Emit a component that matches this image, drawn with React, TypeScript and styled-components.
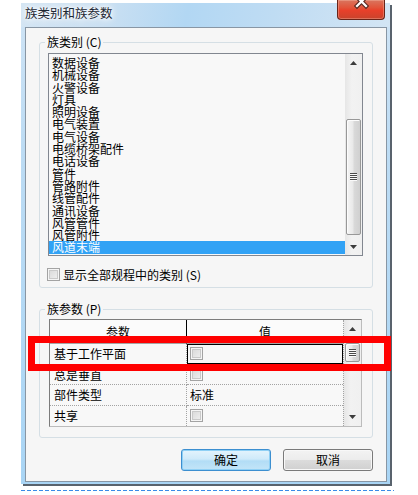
import React from "react";
import styled, { createGlobalStyle } from "styled-components";

const GlobalStyle = createGlobalStyle`
  html, body { margin: 0; padding: 0; background: #ffffff; }
  body {
    font-family: "Noto Sans CJK SC", "Liberation Sans", sans-serif;
    font-size: 12px;
    color: #000;
  }
  * { box-sizing: border-box; }
`;

const Page = styled.div`
  position: relative;
  width: 418px;
  height: 495px;
  padding: 3px 0 0 21px;
  overflow: hidden;
`;

const Window = styled.div`
  width: 369px;
  background: linear-gradient(180deg, #d0e4f5 0%, #bddcf4 30%, #a9d5f5 100%);
  box-shadow: 2px 2px 0 #59636d;
  padding-bottom: 2px;
`;

const TitleBar = styled.div`
  position: relative;
  height: 24px;
  padding: 1px 0 0 4px;
  background: linear-gradient(100deg, #d4e5f3 0%, #cbe0f2 22%, #b2d7f3 45%, #bfdcf3 68%, #d3e5f4 100%);
`;

const Title = styled.span`
  display: inline-block;
  font-size: 12.5px;
  line-height: 16px;
  color: #1d2733;
  text-shadow: 0 0 6px #fff, 0 0 3px #fff, 0 0 10px #fff;
`;

const CloseButton = styled.div`
  position: absolute;
  top: -3px;
  right: 5px;
  width: 48px;
  height: 20px;
  border: 1px solid #6a2418;
  border-top: none;
  border-radius: 0 0 4px 4px;
  background: linear-gradient(180deg, #d9755f 0%, #e2543a 40%, #e8402a 55%, #c9432c 100%);
  box-shadow: inset 0 0 0 1px rgba(255, 200, 180, 0.35);
  overflow: hidden;
`;

const Client = styled.div`
  margin: 0 3px 0 4px;
  border: 1px solid #8896a4;
  background: #f6f6f6;
  padding: 7px 13px 10px 13px;
`;

const Group = styled.fieldset<{ $top: number; $bottom: number }>`
  margin: ${(p) => p.$top}px 0 0 0;
  padding: 0 0 ${(p) => p.$bottom}px 0;
  border: 1px solid #d5dfe5;
  border-radius: 3px;
  min-width: 0;
`;

const Legend = styled.legend`
  margin-left: 5px;
  padding: 0 2px;
  font-size: 12px;
  line-height: 14px;
`;

const ListBox = styled.div`
  display: flex;
  width: 315px;
  height: 203px;
  margin: 4px 0 0 8px;
  border: 1px solid #828790;
  background: #f8f8f8;
`;

const ListItems = styled.div`
  flex: 1;
  padding-top: 3px;
  overflow: hidden;
`;

const ListItem = styled.div<{ $selected?: boolean }>`
  height: 12.3px;
  line-height: 12.3px;
  padding-left: 3px;
  white-space: nowrap;
  background: ${(p) => (p.$selected ? "#31a2f5" : "transparent")};
  color: ${(p) => (p.$selected ? "#ffffff" : "#000000")};
`;

const VScroll = styled.div<{ $w: number; $dotted?: boolean }>`
  width: ${(p) => p.$w}px;
  flex: none;
  display: flex;
  flex-direction: column;
  background: linear-gradient(90deg, #e6e6e6 0%, #f2f2f2 40%, #f0f0f0 100%);
  border-left: ${(p) => (p.$dotted ? "1px dotted #a3a3a3" : "none")};
`;

const ArrowBtn = styled.div<{ $h: number }>`
  height: ${(p) => p.$h}px;
  flex: none;
  display: flex;
  align-items: center;
  justify-content: center;
`;

const Spacer = styled.div`
  flex: 1;
`;

const Thumb = styled.div<{ $top: number; $h: number }>`
  margin: ${(p) => p.$top}px 1px 0 1px;
  height: ${(p) => p.$h}px;
  flex: none;
  border: 1px solid #989898;
  border-radius: 2px;
  background: linear-gradient(90deg, #f5f5f5 0%, #e9e9e9 45%, #d9d9d9 55%, #d0d0d0 100%);
  box-shadow: inset 1px 1px 0 #fcfcfc;
  display: flex;
  align-items: center;
  justify-content: center;
`;

const CheckRow = styled.label`
  display: flex;
  align-items: center;
  gap: 3px;
  margin: 12px 0 0 7px;
  height: 13px;
  line-height: 13px;
  white-space: nowrap;
`;

const CheckBox = styled.span`
  width: 13px;
  height: 13px;
  flex: none;
  border: 1px solid #a3a3a3;
  background: linear-gradient(135deg, #d6d6d6 0%, #f2f2f2 100%);
  box-shadow: inset 0 0 0 1px #f5f5f5, inset 0 0 0 2px #c9c9c9;
`;

const Table = styled.div`
  display: flex;
  width: 313px;
  height: 108px;
  margin: 3px 0 0 9px;
  border: 1px solid #bcbcbc;
  border-top-color: #7c7c7c;
  border-left-color: #7c7c7c;
  background: #f8f8f8;
`;

const Grid = styled.div`
  flex: 1;
  display: grid;
  grid-template-columns: 137px 1fr;
  grid-template-rows: 24px repeat(4, 20.5px);
`;

const HeaderCell = styled.div<{ $divider?: boolean }>`
  display: flex;
  align-items: center;
  justify-content: center;
  background: #fbfbfb;
  border-bottom: 1px solid #a5a5a5;
  border-right: ${(p) => (p.$divider ? "1px solid #000" : "none")};
`;

const Cell = styled.div<{ $first?: boolean; $last?: boolean; $focused?: boolean }>`
  display: flex;
  align-items: center;
  padding-left: ${(p) => (p.$first ? 4 : 3)}px;
  white-space: nowrap;
  border-bottom: ${(p) => (p.$last ? "none" : "1px dotted #a3a3a3")};
  border-right: ${(p) => (p.$first ? "1px dotted #a3a3a3" : "none")};
  box-shadow: ${(p) => (p.$focused ? "inset 0 0 0 1px #000" : "none")};
`;

const ButtonRow = styled.div`
  display: flex;
  justify-content: flex-end;
  gap: 12px;
  margin-top: 11px;
`;

const Button = styled.button<{ $primary?: boolean }>`
  width: 90px;
  height: 22px;
  padding: 0;
  border-radius: 3px;
  font-family: "Noto Sans CJK SC", "Liberation Sans", sans-serif;
  font-size: 12px;
  line-height: 20px;
  color: #000;
  border: 1px solid ${(p) => (p.$primary ? "#3c8fd0" : "#7a7a7a")};
  background: ${(p) =>
    p.$primary
      ? "linear-gradient(180deg, #e4f4fd 0%, #cfeafa 45%, #b2ddf6 55%, #c3e5f8 100%)"
      : "linear-gradient(180deg, #f3f3f3 0%, #ececec 50%, #dcdcdc 51%, #d0d0d0 100%)"};
  box-shadow: ${(p) =>
    p.$primary ? "inset 0 0 0 1px #8fd0f5" : "inset 0 0 0 1px #f8f8f8"};
`;

const Highlight = styled.div`
  position: absolute;
  left: 28px;
  top: 336px;
  width: 363px;
  height: 35px;
  border: 7px solid #ff0000;
  pointer-events: none;
`;

const DashedRule = styled.div`
  width: 373px;
  height: 1px;
  margin-top: 6px;
  background: repeating-linear-gradient(90deg, #3a8ce8 0 4px, transparent 4px 6px);
`;

const UpArrow = () => (
  <svg width="7" height="4" viewBox="0 0 7 4">
    <path d="M0 4 L3.5 0 L7 4 Z" fill="#3c3c3c" />
  </svg>
);

const DownArrow = () => (
  <svg width="7" height="4" viewBox="0 0 7 4">
    <path d="M0 0 L3.5 4 L7 0 Z" fill="#3c3c3c" />
  </svg>
);

const Grip = () => (
  <svg width="7" height="8" viewBox="0 0 7 8">
    {[0, 2, 4, 6].map((y) => (
      <g key={y}>
        <line x1="0" y1={y + 0.5} x2="7" y2={y + 0.5} stroke="#4a4a4a" strokeWidth="1" />
        <line x1="0" y1={y + 1.5} x2="7" y2={y + 1.5} stroke="#fafafa" strokeWidth="1" />
      </g>
    ))}
  </svg>
);

const categories = [
  "数据设备",
  "机械设备",
  "火警设备",
  "灯具",
  "照明设备",
  "电气装置",
  "电气设备",
  "电缆桥架配件",
  "电话设备",
  "管件",
  "管路附件",
  "线管配件",
  "通讯设备",
  "风管管件",
  "风管附件",
  "风道末端",
];

type Param = { name: string; value: "check" | string };

const params: Param[] = [
  { name: "基于工作平面", value: "check" },
  { name: "总是垂直", value: "check" },
  { name: "部件类型", value: "标准" },
  { name: "共享", value: "check" },
];

export default function App() {
  return (
    <>
      <GlobalStyle />
      <Page>
        <Window>
          <TitleBar>
            <Title>族类别和族参数</Title>
            <CloseButton>
              <svg width="48" height="20" viewBox="0 0 48 20">
                <path d="M19 -3 L28 6 M28 -3 L19 6" stroke="#5b2a22" strokeWidth="4.5" strokeLinecap="square" />
                <path d="M19 -3 L28 6 M28 -3 L19 6" stroke="#ffffff" strokeWidth="2.2" strokeLinecap="square" />
              </svg>
            </CloseButton>
          </TitleBar>
          <Client>
            <Group $top={0} $bottom={6}>
              <Legend>族类别 (C)</Legend>
              <ListBox>
                <ListItems>
                  {categories.map((c, i) => (
                    <ListItem key={c} $selected={i === categories.length - 1}>
                      {c}
                    </ListItem>
                  ))}
                </ListItems>
                <VScroll $w={17}>
                  <ArrowBtn $h={17}>
                    <UpArrow />
                  </ArrowBtn>
                  <Thumb $top={48} $h={116}>
                    <Grip />
                  </Thumb>
                  <Spacer />
                  <ArrowBtn $h={17}>
                    <DownArrow />
                  </ArrowBtn>
                </VScroll>
              </ListBox>
              <CheckRow>
                <CheckBox />
                显示全部规程中的类别 (S)
              </CheckRow>
            </Group>

            <Group $top={14} $bottom={10}>
              <Legend>族参数 (P)</Legend>
              <Table>
                <Grid>
                  <HeaderCell $divider>参数</HeaderCell>
                  <HeaderCell>值</HeaderCell>
                  {params.map((p, i) => (
                    <React.Fragment key={p.name}>
                      <Cell $first $last={i === params.length - 1}>
                        {p.name}
                      </Cell>
                      <Cell $last={i === params.length - 1} $focused={i === 0}>
                        {p.value === "check" ? <CheckBox /> : p.value}
                      </Cell>
                    </React.Fragment>
                  ))}
                </Grid>
                <VScroll $w={18} $dotted>
                  <ArrowBtn $h={18}>
                    <UpArrow />
                  </ArrowBtn>
                  <Thumb $top={5} $h={19}>
                    <Grip />
                  </Thumb>
                  <Spacer />
                  <ArrowBtn $h={18}>
                    <DownArrow />
                  </ArrowBtn>
                </VScroll>
              </Table>
            </Group>

            <ButtonRow>
              <Button $primary>确定</Button>
              <Button>取消</Button>
            </ButtonRow>
          </Client>
        </Window>
        <DashedRule />
        <Highlight />
      </Page>
    </>
  );
}
